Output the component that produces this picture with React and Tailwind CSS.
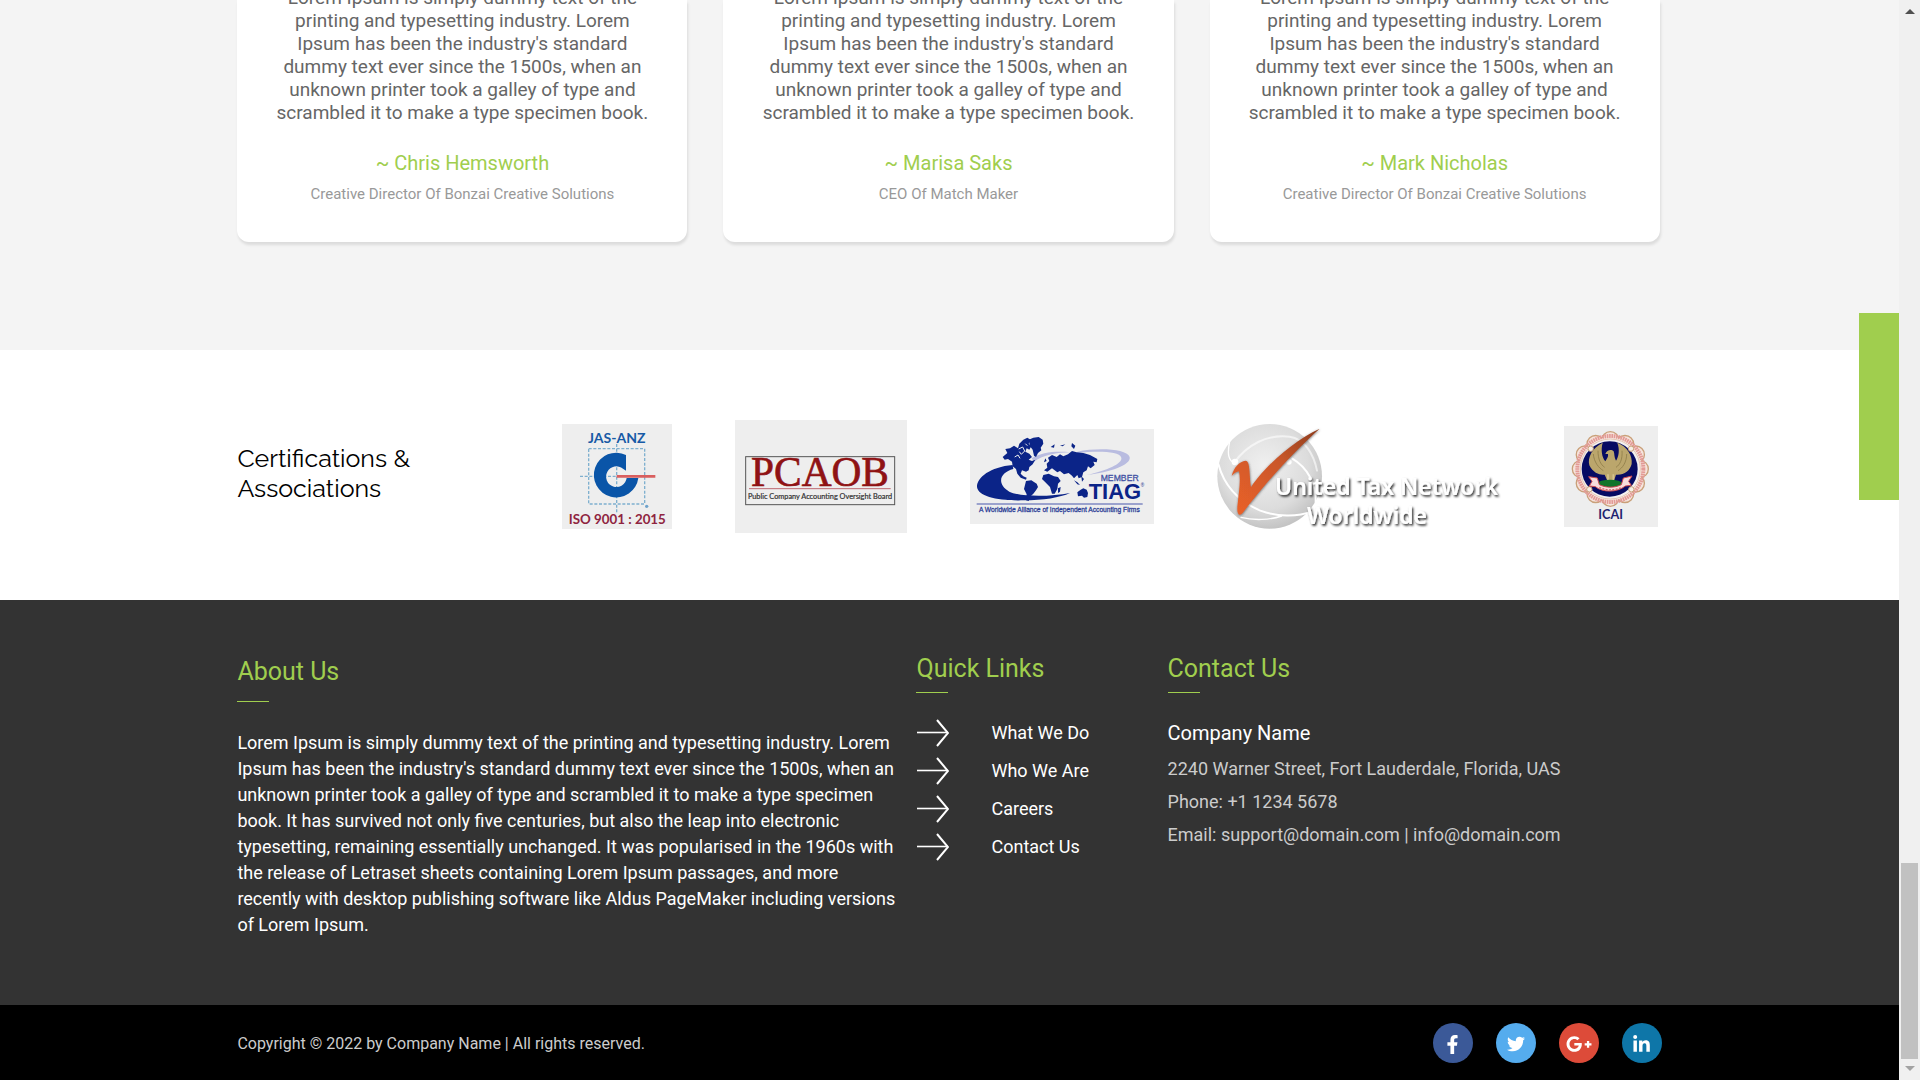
import React from "react";
import { FaFacebookF, FaTwitter, FaGooglePlusG, FaLinkedinIn } from "react-icons/fa";

const testimonials = [
  { name: "Chris Hemsworth", role: "Creative Director Of Bonzai Creative Solutions" },
  { name: "Marisa Saks", role: "CEO Of Match Maker" },
  { name: "Mark Nicholas", role: "Creative Director Of Bonzai Creative Solutions" },
];

const quote =
  "Lorem Ipsum is simply dummy text of the printing and typesetting industry. Lorem Ipsum has been the industry's standard dummy text ever since the 1500s, when an unknown printer took a galley of type and scrambled it to make a type specimen book.";

const about =
  "Lorem Ipsum is simply dummy text of the printing and typesetting industry. Lorem Ipsum has been the industry's standard dummy text ever since the 1500s, when an unknown printer took a galley of type and scrambled it to make a type specimen book. It has survived not only five centuries, but also the leap into electronic typesetting, remaining essentially unchanged. It was popularised in the 1960s with the release of Letraset sheets containing Lorem Ipsum passages, and more recently with desktop publishing software like Aldus PageMaker including versions of Lorem Ipsum.";

const links = ["What We Do", "Who We Are", "Careers", "Contact Us"];

const socials = [
  { label: "Facebook", color: "bg-[#3b5998]", Icon: FaFacebookF, size: 19 },
  { label: "Twitter", color: "bg-[#55acee]", Icon: FaTwitter, size: 18 },
  { label: "Google Plus", color: "bg-[#dd4b39]", Icon: FaGooglePlusG, size: 26 },
  { label: "LinkedIn", color: "bg-[#0e76a8]", Icon: FaLinkedinIn, size: 19 },
];

function IsoLogo() {
  return (
    <svg role="img" aria-label="JAS-ANZ ISO 9001 : 2015" viewBox="0 0 330 315" className="w-[110px] shrink-0">
      <rect width="330" height="315" fill="#eeeeee" />
      <g fill="none" stroke="#7fb0cf" strokeWidth="4" strokeDasharray="9 5">
        <rect x="80" y="74" width="168" height="166" />
        <path d="M164 60V268M54 157H164" />
      </g>
      <circle cx="254" cy="247" r="5" fill="#6fa3cc" />
      <path d="M192 93A67 67 0 1 0 229 162H194A31 31 0 1 1 183 134L192 140Z" fill="#0a55a8" />
      <path d="M164 157H280" stroke="#d95f5f" strokeWidth="8" />
      <text x="164" y="56" textAnchor="middle" fontSize="42" fontWeight="700" fontFamily="Lato, sans-serif" fill="#175aa6">JAS-ANZ</text>
      <text x="166" y="300" textAnchor="middle" fontSize="40" fontWeight="700" fontFamily="Lato, sans-serif" fill="#8f2440">ISO 9001 : 2015</text>
    </svg>
  );
}

function PcaobLogo() {
  return (
    <svg role="img" aria-label="PCAOB Public Company Accounting Oversight Board" viewBox="0 0 516 339" className="w-[172px] shrink-0">
      <rect width="516" height="339" fill="#eeeeee" />
      <rect x="32" y="110" width="447" height="144" fill="none" stroke="#555" strokeWidth="3" />
      <text x="255" y="197" textAnchor="middle" fontSize="124" fontFamily="'Liberation Serif', serif" fill="#8f1214" stroke="#8f1214" strokeWidth="2">PCAOB</text>
      <path d="M42 206H467" stroke="#bd6a72" strokeWidth="3" />
      <text x="255" y="236" textAnchor="middle" fontSize="22" fontFamily="Lato, sans-serif" fill="#333" stroke="#333" strokeWidth="0.6">Public Company Accounting Oversight Board</text>
    </svg>
  );
}

function TiagLogo() {
  return (
    <svg role="img" aria-label="Member TIAG, a worldwide alliance of independent accounting firms" viewBox="0 0 552 285" className="w-[184px] shrink-0">
      <rect width="552" height="285" fill="#eeeeee" />
      <path d="M322 68C380 56 470 58 479 84C484 108 420 130 350 138C410 124 458 104 454 86C448 66 380 66 322 72Z" fill="#b9bce0" />
      <path d="M128 108C60 114 20 146 21 174C24 202 84 216 160 214C220 214 270 206 300 192C240 204 150 204 118 188C78 164 90 130 130 120Z" fill="#0b2488" />
      <path d="M185 88C215 70 255 66 300 70C262 70 220 78 192 98Z" fill="#b9bce0" />
      <g fill="#0b2488">
        <path d="M98 84L112 72L106 60L120 58L132 50L144 58L148 44L160 32L172 26L182 32L176 44L184 52L178 62L170 58L166 68L178 74L186 84L176 92L186 96L196 92L188 106L178 114L176 124L168 128L156 124L152 134L160 142L170 146L168 152L152 146L142 134L138 120L128 112L126 98L114 90L104 92Z" />
        <path d="M176 32L190 26L206 24L218 32L220 44L212 56L214 64L204 72L198 84L192 80L188 62L180 52Z" />
        <path d="M168 156L184 154L200 164L204 174L198 184L190 194L182 202L176 216L168 214L170 196L162 180Z" />
        <path d="M222 124L232 116L230 104L238 96L234 86L246 78L260 84L270 76L280 82L294 76L306 66L320 70L340 72L360 78L382 90L380 100L370 98L374 108L362 118L354 112L350 124L340 130L336 144L326 148L322 138L312 148L306 140L296 132L282 136L270 126L262 130L246 118L232 128Z" />
        <path d="M220 138L236 134L252 142L264 144L272 156L264 164L262 180L254 194L246 194L240 174L226 160L216 150Z" />
        <path d="M264 178L272 174L270 188L264 192ZM312 154L322 160L330 168L322 166ZM334 142L342 150L336 158ZM230 96L222 100L226 88Z" />
        <path d="M322 190L332 182L340 178L350 182L354 192L352 204L342 206L336 200L324 202Z" />
        <path d="M242 54L254 46L252 56ZM270 50L286 46L278 52ZM306 42L316 50L312 60L304 52Z" />
      </g>
      <path d="M146 60L158 54L164 66L154 76L148 68M166 44L172 50M134 84L144 78L150 88" fill="none" stroke="#eeeeee" strokeWidth="3" />
      <text x="392" y="155" fontSize="26" fontFamily="'Liberation Sans', sans-serif" fill="#4150a3" stroke="#4150a3" strokeWidth="0.8">MEMBER</text>
      <text x="356" y="211" fontSize="66" fontWeight="700" fontFamily="'Liberation Sans', sans-serif" fill="#0b2488">TIAG</text>
      <text x="512" y="174" fontSize="14" fontFamily="'Liberation Sans', sans-serif" fill="#0b2488">®</text>
      <path d="M20 225H518" stroke="#7f89c2" strokeWidth="5" />
      <text x="268" y="250" textAnchor="middle" fontSize="20" fontFamily="'Liberation Sans', sans-serif" fill="#2b3d96" stroke="#2b3d96" strokeWidth="0.8">A Worldwide Alliance of Independent Accounting Firms</text>
    </svg>
  );
}

function UnitedTaxLogo() {
  return (
    <svg role="img" aria-label="United Tax Network Worldwide" viewBox="0 0 852 315" className="w-[284px] shrink-0">
      <defs>
        <radialGradient id="globe" cx="45%" cy="40%" r="60%">
          <stop offset="0" stopColor="#f0f0f0" />
          <stop offset="0.7" stopColor="#dcdcdc" />
          <stop offset="1" stopColor="#c4c4c4" />
        </radialGradient>
        <linearGradient id="tick" x1="0" y1="1" x2="1" y2="0">
          <stop offset="0" stopColor="#ec6128" />
          <stop offset="0.6" stopColor="#c8572a" />
          <stop offset="1" stopColor="#8d3c1c" />
        </linearGradient>
        <filter id="soft" x="-10%" y="-20%" width="120%" height="150%">
          <feDropShadow dx="4" dy="5" stdDeviation="3" floodColor="#000" floodOpacity="0.85" />
        </filter>
        <filter id="edge" x="-20%" y="-20%" width="140%" height="140%">
          <feDropShadow dx="1" dy="2" stdDeviation="3" floodColor="#333" floodOpacity="0.7" />
        </filter>
      </defs>
      <ellipse cx="158" cy="157" rx="157" ry="157" fill="url(#globe)" />
      <g fill="none" stroke="#fff" strokeWidth="6" strokeLinecap="round">
        <path d="M4 120C20 180 60 230 130 260C180 278 240 280 285 262" />
        <path d="M50 118C90 62 150 30 218 38C262 44 290 90 300 140" opacity="0.6" />
        <path d="M226 104C270 130 300 180 296 238" />
        <path d="M72 280C110 290 160 288 194 276M38 52C30 90 34 110 54 118" strokeWidth="4" />
      </g>
      <circle cx="54" cy="114" r="10" fill="#fff" />
      <circle cx="216" cy="114" r="8" fill="#fff" />
      <path d="M44 156C50 130 68 112 86 110C100 112 96 150 102 190C140 130 230 50 308 14C240 74 150 170 76 268C66 278 58 270 62 240C66 200 72 170 66 142C58 142 50 150 44 156Z" fill="url(#tick)" filter="url(#edge)" />
      <g fill="#fff" fontFamily="'Noto Sans', sans-serif" fontWeight="600" fontSize="69" filter="url(#soft)">
        <text x="174" y="212">United Tax Network</text>
        <text x="270" y="300">Worldwide</text>
      </g>
    </svg>
  );
}

const petals = Array.from({ length: 12 }, (_, i) => {
  const a = (i * Math.PI) / 6;
  return { x: 139 + 88 * Math.cos(a), y: 129 + 86 * Math.sin(a) };
});

function IcaiLogo() {
  return (
    <svg role="img" aria-label="ICAI" viewBox="0 0 282 303" className="w-[94px] shrink-0">
      <rect width="282" height="303" fill="#eeeeee" />
      {petals.map((p, i) => (
        <circle key={i} cx={p.x} cy={p.y} r="26" fill="#f6e3dc" stroke="#c9a079" strokeWidth="4" />
      ))}
      <circle cx="139" cy="129" r="96" fill="#f6e9e4" />
      <circle cx="139" cy="129" r="99" fill="none" stroke="#e39a96" strokeWidth="12" strokeDasharray="5 2" />
      <circle cx="139" cy="129" r="90" fill="#f3f0f0" stroke="#e0b59a" strokeWidth="2" />
      <ellipse cx="137" cy="129" rx="84" ry="83" fill="#070b63" />
      <g fill="#f5efe6" stroke="#c9a079" strokeWidth="3">
        <circle cx="80" cy="68" r="8" />
        <circle cx="201" cy="68" r="8" />
        <circle cx="76" cy="190" r="8" />
        <circle cx="202" cy="190" r="8" />
      </g>
      <path d="M116 50C84 66 70 94 76 118C88 142 108 148 122 146L130 164H150L156 146C180 148 198 134 203 114C206 88 190 62 160 50C168 72 164 92 156 104C150 94 152 84 149 76C142 68 128 72 124 84L132 84C134 92 128 98 124 106C114 94 110 72 116 50Z" fill="#bba66c" />
      <path d="M88 84C90 108 104 126 118 134M102 74C102 100 110 116 122 124M188 84C188 108 176 126 162 134M174 74C176 100 168 116 156 124" fill="none" stroke="#8f7d49" strokeWidth="2.5" />
      <path d="M132 145V164M148 145V164" stroke="#d6c48f" strokeWidth="5" />
      <ellipse cx="138" cy="172" rx="36" ry="11" fill="#11742a" />
      <path d="M74 152L100 156L106 176C126 186 152 186 172 176L178 156L204 150L194 166L202 178L184 180C160 200 116 200 94 182L76 180L84 166Z" fill="#f7dcdc" stroke="#cf4a4f" strokeWidth="3" />
      <path d="M106 184C126 194 152 194 174 184" fill="none" stroke="#d06a6c" strokeWidth="4" strokeDasharray="6 4" />
      <text x="140" y="280" textAnchor="middle" fontSize="38" fontWeight="700" fontFamily="Lato, sans-serif" fill="#201f70">ICAI</text>
    </svg>
  );
}

function Arrow() {
  return (
    <svg aria-hidden="true" viewBox="0 0 33 28" className="w-[33px]" fill="none" stroke="#fff" strokeWidth="2">
      <path d="M1 13.5H32" strokeWidth="1.6" />
      <path d="M21 1L32 14L21 27" />
    </svg>
  );
}

function FooterTitle({ children, className }) {
  return (
    <h2 className={"text-[25px] leading-[30px] text-[#a0ce4e] after:block after:h-px after:bg-[#a0ce4e] " + className}>
      {children}
    </h2>
  );
}

export default function App() {
  return (
    <div className="flex min-h-screen overflow-hidden bg-white font-['Roboto',sans-serif]">
      <div className="relative flex min-w-0 flex-1 flex-col">
        <section className="bg-[#f4f4f4] pb-27">
          <div className="mx-auto grid w-3/4 grid-cols-3 gap-9 pr-0.5">
            {testimonials.map((t) => (
              <article key={t.name} className="rounded-b-xl bg-white px-9 pb-[37px] text-center shadow-[1px_3px_3px_rgba(0,0,0,0.1)]">
                <p className="-mt-3.5 text-[19px] leading-[23px] text-[#666]">{quote}</p>
                <h3 className="mt-[27px] text-xl leading-6 text-[#a0ce4e]">~ {t.name}</h3>
                <p className="mt-2 text-[15px] leading-[22px] text-[#999]">{t.role}</p>
              </article>
            ))}
          </div>
        </section>

        <section className="pt-[70px] pb-[67px]">
          <div className="mx-auto flex w-3/4 items-center justify-between">
            <h2 className="w-[200px] pb-2 font-['Raleway','Lato',sans-serif] text-[25px] leading-[30px] text-black">
              Certifications &amp; Associations
            </h2>
            <div className="flex items-center gap-[63px] pr-1">
              <IsoLogo />
              <PcaobLogo />
              <TiagLogo />
              <UnitedTaxLogo />
              <IcaiLogo />
            </div>
          </div>
        </section>

        <footer className="flex flex-1 flex-col bg-[#333]">
          <div className="mx-auto grid w-3/4 flex-1 grid-cols-[679fr_251fr_494fr] pt-[54px] pb-[65px]">
            <section className="pt-[3px] pr-[18px]">
              <FooterTitle className="after:mt-3.5 after:w-8">About Us</FooterTitle>
              <p className="mt-7 text-lg leading-[26px] text-white">{about}</p>
            </section>
            <nav aria-label="Quick links">
              <FooterTitle className="after:mt-2 after:w-8">Quick Links</FooterTitle>
              <ul className="mt-[26px]">
                {links.map((l) => (
                  <li key={l}>
                    <a href="#" className="flex h-[38px] items-start gap-[42px] text-lg leading-7 text-white">
                      <Arrow />
                      {l}
                    </a>
                  </li>
                ))}
              </ul>
            </nav>
            <section>
              <FooterTitle className="after:mt-2 after:w-8">Contact Us</FooterTitle>
              <h3 className="mt-[26px] text-xl leading-7 text-white">Company Name</h3>
              <div className="mt-[5px] text-lg leading-[33px] text-[#ccc]">
                <p>2240 Warner Street, Fort Lauderdale, Florida, UAS</p>
                <p>Phone: +1 1234 5678</p>
                <p>
                  Email: <a href="#">support@domain.com</a> | <a href="#">info@domain.com</a>
                </p>
              </div>
            </section>
          </div>
          <div className="bg-black">
            <div className="mx-auto flex h-[75px] w-3/4 items-center justify-between">
              <p className="pt-0.5 text-base text-[#ccc]">Copyright © 2022 by Company Name | All rights reserved.</p>
              <div className="flex gap-[23px]">
                {socials.map(({ label, color, Icon, size }) => (
                  <a key={label} href="#" aria-label={label} className={"flex size-10 items-center justify-center rounded-full pt-[3px] text-white " + color}>
                    <Icon size={size} />
                  </a>
                ))}
              </div>
            </div>
          </div>
        </footer>
        <button type="button" aria-label="Open side panel" className="absolute top-[313px] right-0 h-[187px] w-10 bg-[#a0ce4e]" />
      </div>

      <div aria-hidden="true" className="flex w-[21px] shrink-0 flex-col items-center bg-[#f0f0f0] pt-[9px] pb-[9px]">
        <span className="h-0 w-0 border-x-5 border-b-5 border-x-transparent border-b-[#505050]" />
        <span className="mt-auto mb-[7px] h-[196px] w-[17px] bg-[#c1c1c1]" />
        <span className="h-0 w-0 border-x-5 border-t-5 border-x-transparent border-t-[#a3a3a3]" />
      </div>
    </div>
  );
}
